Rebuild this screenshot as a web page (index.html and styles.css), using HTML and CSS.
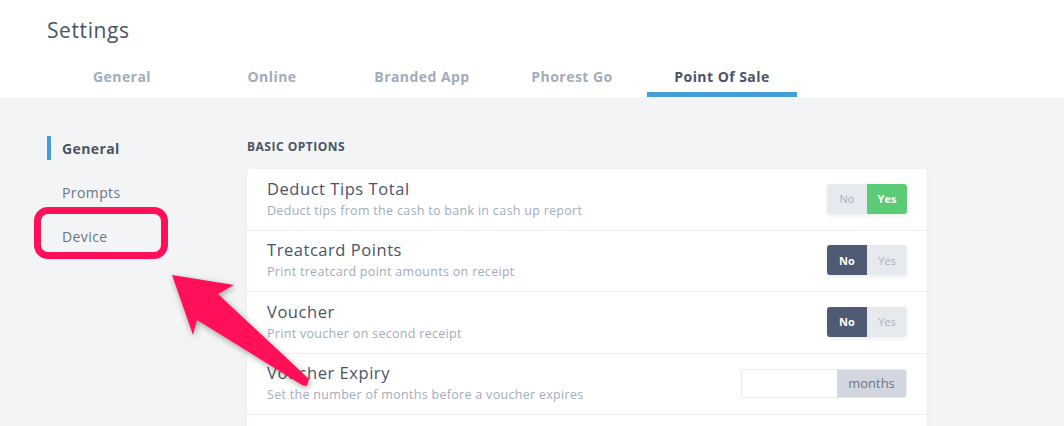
FILE: index.html
```html
<!DOCTYPE html>
<html>
<head>
<meta charset="utf-8">
<link rel="stylesheet" href="styles.css">
</head>
<body>
<header class="header">
  <h1 class="title">Settings</h1>
  <nav class="tabs">
    <div class="tab">General</div>
    <div class="tab">Online</div>
    <div class="tab">Branded App</div>
    <div class="tab">Phorest Go</div>
    <div class="tab active">Point Of Sale</div>
  </nav>
</header>
<main class="main">
  <aside class="sidenav">
    <div class="side-item active">General</div>
    <div class="side-item">Prompts</div>
    <div class="side-item">Device</div>
  </aside>
  <section class="content">
    <h2 class="section-title">BASIC OPTIONS</h2>
    <div class="card">
      <div class="row">
        <div class="text">
          <div class="row-title">Deduct Tips Total</div>
          <div class="row-desc">Deduct tips from the cash to bank in cash up report</div>
        </div>
        <div class="toggle"><span class="opt">No</span><span class="opt yes-on">Yes</span></div>
      </div>
      <div class="row">
        <div class="text">
          <div class="row-title">Treatcard Points</div>
          <div class="row-desc">Print treatcard point amounts on receipt</div>
        </div>
        <div class="toggle"><span class="opt no-on">No</span><span class="opt">Yes</span></div>
      </div>
      <div class="row">
        <div class="text">
          <div class="row-title">Voucher</div>
          <div class="row-desc">Print voucher on second receipt</div>
        </div>
        <div class="toggle"><span class="opt no-on">No</span><span class="opt">Yes</span></div>
      </div>
      <div class="row">
        <div class="text">
          <div class="row-title">Voucher Expiry</div>
          <div class="row-desc">Set the number of months before a voucher expires</div>
        </div>
        <div class="input-group"><input class="num" type="text"><span class="addon">months</span></div>
      </div>
      <div class="row-empty"></div>
    </div>
  </section>
</main>
<div class="highlight"></div>
<svg class="arrow" width="1064" height="426" viewBox="0 0 1064 426">
  <polygon points="172,275 234,285 218,294 309,379 307,386 302,385 197,320 193,335" fill="#ff1059"/>
</svg>
</body>
</html>
```
FILE: styles.css
```css
* { box-sizing: border-box; }
html, body { margin: 0; padding: 0; }
body {
  background: #f3f4f6;
  font-family: "Open Sans", "Liberation Sans", sans-serif;
  color: #4a5468;
  position: relative;
  height: 426px;
  overflow: hidden;
}
.header {
  background: #fff;
  padding: 0 0 0 47px;
  height: 97px;
  display: flex;
  flex-direction: column;
  justify-content: space-between;
}
.title {
  margin: 0;
  padding-top: 17px;
  font-size: 21px;
  font-weight: 500;
  line-height: 26px;
  letter-spacing: 0.6px;
  color: #4a5468;
}
.tabs { display: flex; }
.tab {
  width: 150px;
  text-align: center;
  font-size: 14px;
  font-weight: 700;
  letter-spacing: 0.45px;
  color: #a3abbd;
  padding: 0 0 6px;
  line-height: 18px;
  border-bottom: 5px solid transparent;
}
.tab.active { color: #4a5468; border-bottom-color: #459ed6; }

.main { display: flex; padding-left: 47px; }
.sidenav { width: 200px; padding-top: 29px; }
.side-item {
  height: 44px;
  display: flex;
  align-items: center;
  padding-left: 15px;
  font-size: 14px;
  letter-spacing: 0.4px;
  color: #6a7487;
}
.side-item.active {
  font-weight: 700;
  color: #4a5468;
  position: relative;
}
.side-item.active::before {
  content: "";
  position: absolute;
  left: 0; top: 10px;
  width: 4px; height: 24px;
  background: #459ed6;
}
.content { width: 680px; }
.section-title {
  margin: 0;
  padding-top: 42px;
  font-size: 12px;
  font-weight: 700;
  line-height: 16px;
  letter-spacing: 0.5px;
  color: #4a5468;
  height: 72px;
}
.card {
  background: #fff;
  border-radius: 4px;
  box-shadow: 0 1px 3px rgba(30, 40, 60, 0.06);
}
.row {
  display: flex;
  align-items: center;
  justify-content: space-between;
  padding: 9px 20px 10px;
  border-bottom: 1px solid #eef0f3;
  height: 61.5px;
}
.row-empty { height: 40px; }
.row-title { font-size: 16.5px; line-height: 20px; color: #4a5468; font-weight: 500; letter-spacing: 0.55px; }
.row-desc { font-size: 12.5px; line-height: 16px; margin-top: 4px; color: #a3abbd; letter-spacing: 0.3px; }
.toggle {
  display: flex;
  border-radius: 3px;
  overflow: hidden;
  box-shadow: 0 2px 4px rgba(30, 40, 60, 0.08);
}
.opt {
  width: 40px; height: 30px;
  display: flex; align-items: center; justify-content: center;
  font-size: 11px;
  background: #e6e9ee;
  color: #aab1c0;
}
.opt.yes-on { background: #5ccb75; color: #fff; font-weight: 700; }
.opt.no-on { background: #4f5a73; color: #fff; font-weight: 700; }
.input-group {
  display: flex;
  height: 29px;
  border: 1px solid #e4e7ec;
  border-radius: 3px;
  overflow: hidden;
}
.num { width: 95px; border: 0; outline: none; background: #fff; }
.addon {
  width: 69px;
  background: #d1d6df;
  color: #6e7687;
  font-size: 13px;
  display: flex; align-items: center; justify-content: center;
}
.highlight {
  position: absolute;
  left: 34px; top: 207px;
  width: 134px; height: 52px;
  border: 7px solid #ff1059;
  border-radius: 14px;
}
.arrow {
  position: absolute;
  left: 0; top: 0;
  pointer-events: none;
  filter: drop-shadow(1px 2px 3px rgba(0,0,0,0.35));
}
```
